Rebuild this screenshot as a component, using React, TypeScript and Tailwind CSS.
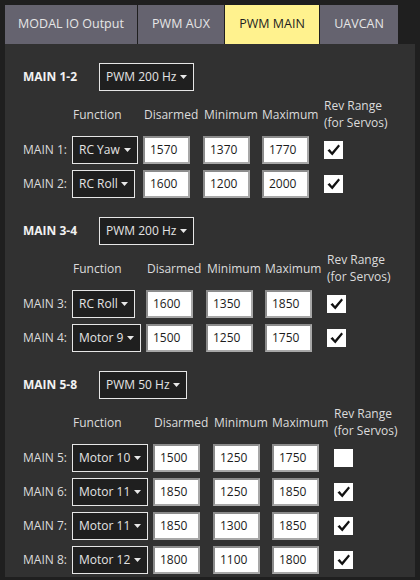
type Row = { ch: number; fn: string; fnW: string; dis: string; min: string; max: string; rev: boolean };

type Section = { title: string; rate: string; rateW: string; cols: string; rows: Row[] };

const sections: Section[] = [
  {
    title: "MAIN 1-2",
    rate: "PWM 200 Hz",
    rateW: "w-[95px]",
    cols: "grid-cols-[49px_71px_60px_59px_62px_1fr]",
    rows: [
      { ch: 1, fn: "RC Yaw", fnW: "w-[66px]", dis: "1570", min: "1370", max: "1770", rev: true },
      { ch: 2, fn: "RC Roll", fnW: "w-[63px]", dis: "1600", min: "1200", max: "2000", rev: true },
    ],
  },
  {
    title: "MAIN 3-4",
    rate: "PWM 200 Hz",
    rateW: "w-[95px]",
    cols: "grid-cols-[49px_74px_60px_59px_62px_1fr]",
    rows: [
      { ch: 3, fn: "RC Roll", fnW: "w-[63px]", dis: "1600", min: "1350", max: "1850", rev: true },
      { ch: 4, fn: "Motor 9", fnW: "w-[69px]", dis: "1500", min: "1250", max: "1750", rev: true },
    ],
  },
  {
    title: "MAIN 5-8",
    rate: "PWM 50 Hz",
    rateW: "w-[88px]",
    cols: "grid-cols-[49px_81px_60px_59px_62px_1fr]",
    rows: [
      { ch: 5, fn: "Motor 10", fnW: "w-[76px]", dis: "1500", min: "1250", max: "1750", rev: false },
      { ch: 6, fn: "Motor 11", fnW: "w-[76px]", dis: "1850", min: "1250", max: "1850", rev: true },
      { ch: 7, fn: "Motor 11", fnW: "w-[76px]", dis: "1850", min: "1300", max: "1850", rev: true },
      { ch: 8, fn: "Motor 12", fnW: "w-[76px]", dis: "1800", min: "1100", max: "1800", rev: true },
    ],
  },
];

const tabs = [
  { name: "MODAL IO Output", w: "w-[132px]" },
  { name: "PWM AUX", w: "w-[86px]" },
  { name: "PWM MAIN", w: "w-[94px]", active: true },
  { name: "UAVCAN", w: "w-[78px]" },
];

function Caret() {
  return (
    <svg width="7" height="4" viewBox="0 0 7 4" className="shrink-0">
      <path d="M0 0 H7 L3.5 4 Z" fill="#e8e8e8" />
    </svg>
  );
}

function Dropdown({ label, w }: { label: string; w: string }) {
  return (
    <div className={`${w} h-[28px] border border-[#e6e6e6] bg-[#1f1f1f] text-[#e4e4e4] flex items-center justify-between pl-[6px] pr-[6px]`}>
      <span className="whitespace-nowrap">{label}</span>
      <Caret />
    </div>
  );
}

function NumBox({ value }: { value: string }) {
  return (
    <div className="w-[47px] h-[28px] bg-white border-2 border-t-[#8c8c8c] border-l-[#8c8c8c] border-r-[#a8a8a8] border-b-[#a8a8a8] text-[#1c1c1c] flex items-center pl-[5px]">
      {value}
    </div>
  );
}

function Check({ on }: { on: boolean }) {
  return (
    <div className="w-[19px] h-[18px] bg-white flex items-center justify-center">
      {on && (
        <svg width="15" height="14" viewBox="0 0 15 14">
          <path d="M1.5 7.6 L3.6 6 L6 9 L12.4 1.6 L14 3 L6.3 12.6 Z" fill="#111" />
        </svg>
      )}
    </div>
  );
}

export default function App() {
  return (
    <div className="w-[420px] h-[580px] bg-[#1f1f1f] pt-[5px] pl-[5px] text-[12px] overflow-hidden" style={{ fontFamily: '"Open Sans", "Noto Sans", sans-serif' }}>
      <div className="flex gap-[1px] h-[39px]">
        {tabs.map((t) => (
          <div
            key={t.name}
            className={`${t.w} flex items-center justify-center text-[12.5px] ${t.active ? "bg-[#fff28e] text-[#1e1e1e]" : "bg-[#65636f] text-[#e6e6e6]"}`}
          >
            {t.name}
          </div>
        ))}
      </div>
      <div className="w-[410px] h-[533px] bg-[#313131] pl-[18px] pt-[19px] flex flex-col gap-[19px]">
        {sections.map((s) => (
          <div key={s.title} className="flex flex-col">
            <div className="flex items-center h-[28px]">
              <div className="w-[76px] font-bold text-[#f2f2f2]">{s.title}</div>
              <Dropdown label={s.rate} w={s.rateW} />
            </div>
            <div className={`grid ${s.cols} mt-[6px] h-[34px] items-center leading-[17px] text-[#dcdcdc]`}>
              <div />
              <div className="pl-[1px]">Function</div>
              <div className="pl-[1px]">Disarmed</div>
              <div className="pl-[1px]">Minimum</div>
              <div>Maximum</div>
              <div>
                Rev Range
                <br />
                (for Servos)
              </div>
            </div>
            <div className="flex flex-col gap-[6px] mt-[5px]">
              {s.rows.map((r) => (
                <div key={r.ch} className={`grid ${s.cols} items-center h-[28px]`}>
                  <div className="text-[#dcdcdc] whitespace-nowrap">MAIN {r.ch}:</div>
                  <Dropdown label={r.fn} w={r.fnW} />
                  <NumBox value={r.dis} />
                  <NumBox value={r.min} />
                  <NumBox value={r.max} />
                  <Check on={r.rev} />
                </div>
              ))}
            </div>
          </div>
        ))}
      </div>
    </div>
  );
}
